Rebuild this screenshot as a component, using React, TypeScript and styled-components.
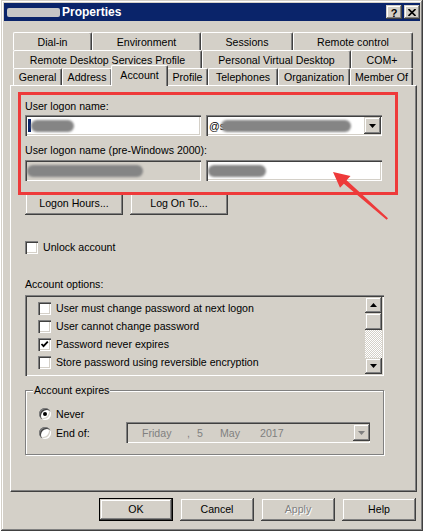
import styled, { createGlobalStyle } from "styled-components";

const FACE = "#d4d0c8";
const SHADOW = "#808080";
const DARK = "#404040";
const NAVY = "#0a246a";
const RED = "#ee3a3a";

const GlobalStyle = createGlobalStyle`
  html, body {
    margin: 0;
    padding: 0;
    background: #fff;
  }
  body {
    font-family: "Liberation Sans", Arial, sans-serif;
    font-size: 10.6px;
    color: #000;
  }
`;

const raised = `
  box-shadow: inset -1px -1px ${DARK}, inset 1px 1px ${FACE},
    inset -2px -2px ${SHADOW}, inset 2px 2px #fff;
`;

const sunken = `
  box-shadow: inset 1px 1px ${SHADOW}, inset 2px 2px ${DARK},
    inset -1px -1px #fff, inset -2px -2px ${FACE};
`;

const Page = styled.div`
  width: 427px;
  height: 532px;
  overflow: hidden;
  padding-left: 1px;
  box-sizing: border-box;
`;

const Window = styled.div`
  width: 422px;
  height: 531px;
  box-sizing: border-box;
  background: ${FACE};
  padding: 3px;
  display: flex;
  flex-direction: column;
  ${raised}
`;

const TitleBar = styled.div`
  height: 18px;
  background: ${NAVY};
  display: flex;
  align-items: center;
  padding-left: 3px;
`;

const TitleText = styled.span`
  color: #fff;
  font-weight: bold;
  font-size: 12px;
  flex: 1;
`;

const TitleBlur = styled.span`
  display: inline-block;
  width: 53px;
  height: 9px;
  margin-right: 2px;
  background: #c6c6c6;
  border-radius: 2px;
  vertical-align: -1px;
`;

const CaptionButton = styled.div`
  width: 16px;
  height: 14px;
  box-sizing: border-box;
  background: ${FACE};
  display: flex;
  align-items: center;
  justify-content: center;
  font-weight: bold;
  font-size: 11px;
  margin-left: 2px;
  padding-top: 1px;
  ${raised}
`;

const Body = styled.div`
  padding: 11px 3px 0 6px;
  display: flex;
  flex-direction: column;
`;

const TabStrip = styled.div`
  margin: 0 3px;
  display: flex;
  flex-direction: column;
`;

const TabRow = styled.div<{ $h: number }>`
  display: flex;
  align-items: flex-start;
  height: ${(p) => p.$h}px;
`;

const Tab = styled.div<{ $w: number; $h: number; $active?: boolean }>`
  width: ${(p) => p.$w + (p.$active ? 2 : 0)}px;
  height: ${(p) => (p.$active ? p.$h + 4 : p.$h)}px;
  margin: ${(p) => (p.$active ? "-3px -1px -1px" : "0")};
  padding-bottom: ${(p) => (p.$active ? 3 : 0)}px;
  box-sizing: border-box;
  flex-shrink: 0;
  background: ${FACE};
  border-top: 1px solid #fff;
  border-left: 1px solid #fff;
  border-right: 1px solid ${DARK};
  border-radius: 2px 2px 0 0;
  box-shadow: inset -1px 0 ${SHADOW};
  display: flex;
  align-items: center;
  justify-content: center;
  white-space: nowrap;
  position: relative;
  z-index: ${(p) => (p.$active ? 2 : 0)};
`;

const Panel = styled.div`
  position: relative;
  height: 407px;
  box-sizing: border-box;
  border-top: 1px solid #fff;
  border-left: 1px solid #fff;
  border-right: 1px solid ${DARK};
  border-bottom: 1px solid ${DARK};
  box-shadow: inset -1px -1px ${SHADOW};
  padding: 14px 32px 0 14px;
  display: flex;
  flex-direction: column;
`;

const Label = styled.div<{ $mt?: number; $mb?: number }>`
  line-height: 13px;
  margin-top: ${(p) => p.$mt ?? 0}px;
  margin-bottom: ${(p) => p.$mb ?? 0}px;
`;

const FieldRow = styled.div`
  display: grid;
  grid-template-columns: 176px 176px;
  column-gap: 5px;
  height: 21px;
`;

const TextBox = styled.div<{ $disabled?: boolean }>`
  box-sizing: border-box;
  height: 21px;
  background: ${(p) => (p.$disabled ? FACE : "#fff")};
  padding: 2px 2px 2px 3px;
  display: flex;
  align-items: center;
  overflow: hidden;
  ${sunken}
`;

const Blob = styled.span<{ $w: number; $ml?: number }>`
  display: inline-block;
  width: ${(p) => p.$w}px;
  height: 12px;
  margin-left: ${(p) => p.$ml ?? 0}px;
  background: #858585;
  border-radius: 7px;
  filter: blur(1.2px);
  flex-shrink: 0;
`;

const Caret = styled.span`
  display: inline-block;
  width: 3px;
  height: 13px;
  background: ${NAVY};
  flex-shrink: 0;
`;

const DropButton = styled.div<{ $disabled?: boolean }>`
  width: 17px;
  height: 17px;
  box-sizing: border-box;
  margin-left: auto;
  margin-right: -1px;
  background: ${FACE};
  display: flex;
  align-items: center;
  justify-content: center;
  flex-shrink: 0;
  ${raised}
`;

const ButtonRow = styled.div<{ $mt?: number }>`
  display: flex;
  gap: 7px;
  margin-top: ${(p) => p.$mt ?? 0}px;
`;

const Button = styled.div<{ $w: number; $default?: boolean; $disabled?: boolean }>`
  width: ${(p) => p.$w}px;
  height: 23px;
  box-sizing: border-box;
  background: ${FACE};
  display: flex;
  align-items: center;
  justify-content: center;
  padding-bottom: 1px;
  color: ${(p) => (p.$disabled ? SHADOW : "#000")};
  text-shadow: ${(p) => (p.$disabled ? "1px 1px 0 #fff" : "none")};
  border: ${(p) => (p.$default ? "1px solid #000" : "none")};
  ${raised}
`;

const CheckRow = styled.div<{ $mt?: number }>`
  display: flex;
  align-items: center;
  gap: 5px;
  height: 13px;
  margin-top: ${(p) => p.$mt ?? 0}px;
  line-height: 13px;
  white-space: nowrap;
`;

const CheckBox = styled.span`
  width: 13px;
  height: 13px;
  box-sizing: border-box;
  background: #fff;
  display: flex;
  align-items: center;
  justify-content: center;
  flex-shrink: 0;
  ${sunken}
`;

const ListBox = styled.div`
  height: 81px;
  box-sizing: border-box;
  padding: 2px;
  display: flex;
  ${sunken}
`;

const ListItems = styled.div`
  flex: 1;
  display: flex;
  flex-direction: column;
  gap: 5px;
  padding: 5px 0 0 11px;
`;

const ScrollBar = styled.div`
  width: 17px;
  display: flex;
  flex-direction: column;
`;

const ScrollButton = styled.div<{ $h: number }>`
  height: ${(p) => p.$h}px;
  box-sizing: border-box;
  background: ${FACE};
  display: flex;
  align-items: center;
  justify-content: center;
  flex-shrink: 0;
  ${raised}
`;

const ScrollTrack = styled.div`
  flex: 1;
  background-image: repeating-conic-gradient(#fff 0 25%, ${FACE} 0 50%);
  background-size: 2px 2px;
`;

const GroupBox = styled.div`
  position: relative;
  margin-top: 14px;
  height: 65px;
  box-sizing: border-box;
  border: 1px solid ${SHADOW};
  box-shadow: inset 1px 1px #fff, 1px 1px #fff;
  padding: 16px 13px 0 13px;
  display: flex;
  flex-direction: column;
  gap: 2px;
`;

const Legend = styled.span`
  position: absolute;
  top: -7px;
  left: 7px;
  padding: 0 1px;
  background: ${FACE};
  line-height: 13px;
`;

const RadioRow = styled.div<{ $h: number }>`
  display: flex;
  align-items: center;
  height: ${(p) => p.$h}px;
  white-space: nowrap;
`;

const Radio = styled.span`
  width: 12px;
  height: 12px;
  border-radius: 50%;
  box-sizing: border-box;
  background: #fff;
  margin-right: 5px;
  display: flex;
  align-items: center;
  justify-content: center;
  flex-shrink: 0;
  ${sunken}
`;

const RadioDot = styled.span`
  width: 4px;
  height: 4px;
  border-radius: 50%;
  background: #000;
`;

const DatePicker = styled.div`
  margin-left: auto;
  width: 244px;
  height: 21px;
  box-sizing: border-box;
  padding: 2px 1px 2px 16px;
  display: flex;
  align-items: center;
  color: ${SHADOW};
  ${sunken}
`;

const DatePart = styled.span<{ $w: number }>`
  width: ${(p) => p.$w}px;
  flex-shrink: 0;
`;

const BottomBar = styled.div`
  margin-top: 6px;
  display: flex;
  justify-content: flex-end;
  gap: 7px;
  padding-right: 1px;
`;

const Highlight = styled.div`
  position: absolute;
  left: 7px;
  top: 6px;
  width: 380px;
  height: 103px;
  box-sizing: border-box;
  border: 3px solid ${RED};
  pointer-events: none;
`;

const ArrowSvg = styled.svg`
  position: absolute;
  left: 319px;
  top: 79px;
  pointer-events: none;
`;

const Down = ({ color = "#000" }: { color?: string }) => (
  <svg width="7" height="4" viewBox="0 0 7 4">
    <polygon points="0,0 7,0 3.5,4" fill={color} />
  </svg>
);

const Up = () => (
  <svg width="7" height="4" viewBox="0 0 7 4">
    <polygon points="0,4 7,4 3.5,0" fill="#000" />
  </svg>
);

const Check = () => (
  <svg width="9" height="9" viewBox="0 0 9 9">
    <path d="M1.5 4 L3.5 6.2 L7.8 1.6" stroke="#000" strokeWidth="1.8" fill="none" />
  </svg>
);

const tabRows = [
  {
    h: 18,
    tabs: [
      ["Dial-in", 79],
      ["Environment", 109],
      ["Sessions", 92],
      ["Remote control", 120],
    ],
  },
  {
    h: 18,
    tabs: [
      ["Remote Desktop Services Profile", 189],
      ["Personal Virtual Desktop", 149],
      ["COM+", 62],
    ],
  },
  {
    h: 17,
    tabs: [
      ["General", 49],
      ["Address", 50],
      ["Account", 55],
      ["Profile", 41],
      ["Telephones", 70],
      ["Organization", 72],
      ["Member Of", 63],
    ],
  },
] as const;

const options = [
  { text: "User must change password at next logon", checked: false },
  { text: "User cannot change password", checked: false },
  { text: "Password never expires", checked: true },
  { text: "Store password using reversible encryption", checked: false },
];

export default function App() {
  return (
    <>
      <GlobalStyle />
      <Page>
        <Window>
          <TitleBar>
            <TitleText>
              <TitleBlur />
              Properties
            </TitleText>
            <CaptionButton>?</CaptionButton>
            <CaptionButton>
              <svg width="8" height="7" viewBox="0 0 8 7">
                <path d="M0.5 0 L7.5 7 M7.5 0 L0.5 7" stroke="#000" strokeWidth="1.6" />
              </svg>
            </CaptionButton>
          </TitleBar>

          <Body>
            <TabStrip>
              {tabRows.map((row, i) => (
                <TabRow key={i} $h={row.h}>
                  {row.tabs.map(([name, w]) => (
                    <Tab key={name} $w={w} $h={row.h} $active={name === "Account"}>
                      {name}
                    </Tab>
                  ))}
                </TabRow>
              ))}
            </TabStrip>

            <Panel>
              <Label $mb={2}>User logon name:</Label>
              <FieldRow>
                <TextBox>
                  <Caret />
                  <Blob $w={43} />
                </TextBox>
                <TextBox>
                  <span>@s</span>
                  <Blob $w={130} $ml={-4} />
                  <DropButton>
                    <Down />
                  </DropButton>
                </TextBox>
              </FieldRow>

              <Label $mt={8} $mb={3}>
                User logon name (pre-Windows 2000):
              </Label>
              <FieldRow>
                <TextBox $disabled>
                  <Blob $w={116} $ml={-1} />
                </TextBox>
                <TextBox>
                  <Blob $w={58} $ml={-1} />
                </TextBox>
              </FieldRow>

              <ButtonRow $mt={11}>
                <Button $w={98}>Logon Hours...</Button>
                <Button $w={98}>Log On To...</Button>
              </ButtonRow>

              <CheckRow $mt={26}>
                <CheckBox />
                Unlock account
              </CheckRow>

              <Label $mt={24} $mb={4}>
                Account options:
              </Label>
              <ListBox>
                <ListItems>
                  {options.map((o) => (
                    <CheckRow key={o.text}>
                      <CheckBox>{o.checked && <Check />}</CheckBox>
                      {o.text}
                    </CheckRow>
                  ))}
                </ListItems>
                <ScrollBar>
                  <ScrollButton $h={16}>
                    <Up />
                  </ScrollButton>
                  <ScrollButton $h={17} />
                  <ScrollTrack />
                  <ScrollButton $h={16}>
                    <Down />
                  </ScrollButton>
                </ScrollBar>
              </ListBox>

              <GroupBox>
                <Legend>Account expires</Legend>
                <RadioRow $h={13}>
                  <Radio>
                    <RadioDot />
                  </Radio>
                  Never
                </RadioRow>
                <RadioRow $h={21}>
                  <Radio />
                  End of:
                  <DatePicker>
                    <DatePart $w={45}>Friday</DatePart>
                    <DatePart $w={10}>,</DatePart>
                    <DatePart $w={23}>5</DatePart>
                    <DatePart $w={40}>May</DatePart>
                    <DatePart $w={40}>2017</DatePart>
                    <DropButton>
                      <Down color={SHADOW} />
                    </DropButton>
                  </DatePicker>
                </RadioRow>
              </GroupBox>

              <Highlight />
              <ArrowSvg width="70" height="65" viewBox="0 0 70 65">
                <polygon
                  points="3,7 20.5,11 16.6,15.3 58,53.3 56.6,54.7 13.9,18.7 10,22.8"
                  fill={RED}
                />
              </ArrowSvg>
            </Panel>

            <BottomBar>
              <Button $w={74} $default>
                OK
              </Button>
              <Button $w={74}>Cancel</Button>
              <Button $w={74} $disabled>
                Apply
              </Button>
              <Button $w={74}>Help</Button>
            </BottomBar>
          </Body>
        </Window>
      </Page>
    </>
  );
}
